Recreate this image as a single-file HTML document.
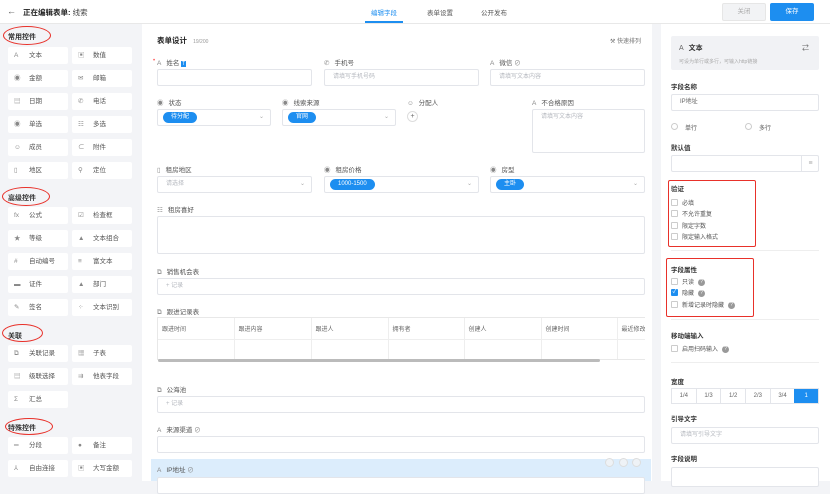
<!DOCTYPE html>
<html><head><meta charset="utf-8"><style>
*{box-sizing:border-box;margin:0;padding:0}
body{width:830px;height:481px;overflow:hidden;background:#f3f4f7;font-family:"Liberation Sans","Noto Sans CJK SC",sans-serif;font-size:7px;color:#333;position:relative}
.a{position:absolute}
.card{position:absolute;background:#fff;border-radius:2px;height:17px;width:60px;line-height:17px;padding-left:6px;color:#555;font-size:6.5px}
.card i{display:inline-block;width:9px;font-style:normal;color:#888;margin-right:6px}
.h{position:absolute;left:8px;font-size:7px;font-weight:bold;color:#333}
.ell{position:absolute;border:1.5px solid #e8312a;border-radius:50%}
.lbl{position:absolute;font-size:6.5px;color:#555}
.lbl i{font-style:normal;color:#888;margin-right:5px}
.inp{position:absolute;border:1px solid #e3e5ea;border-radius:2px;background:#fff;height:17px;color:#b5b8bf;font-size:6px;line-height:15px;padding-left:8px}
.tag{display:inline-block;background:#1d8ef0;color:#fff;border-radius:8px;padding:0 8px;height:11px;line-height:11px;font-size:6px;margin-top:2px;margin-left:-3px}
.dd{position:absolute;right:6px;top:0;color:#aaa;font-size:6px}
.rl{position:absolute;font-size:6.5px;color:#333;font-weight:bold}
.cb{position:absolute;width:7px;height:7px;border:1px solid #ccc;border-radius:1px;background:#fff}
.ct{position:absolute;font-size:6px;color:#555}
.q{display:inline-block;width:7px;height:7px;border-radius:50%;background:#999;color:#fff;font-size:5px;text-align:center;line-height:7px;margin-left:4px;vertical-align:middle}
.red{position:absolute;border:1.5px solid #e8312a;border-radius:2px}
</style></head><body>
<!-- header -->
<div class="a" style="left:0;top:0;width:830px;height:24px;background:#fff;border-bottom:1px solid #e8e8e8"></div>
<div class="a" style="left:7px;top:6px;font-size:9px;color:#555">←</div>
<div class="a" style="left:23px;top:7px;font-size:7.5px;font-weight:bold;color:#222">正在编辑表单: <span style="font-weight:normal;color:#444">线索</span></div>
<div class="a" style="left:371px;top:7px;font-size:6.5px;color:#1d8ef0">编辑字段</div>
<div class="a" style="left:365px;top:21px;width:38px;height:2px;background:#1d8ef0"></div>
<div class="a" style="left:427px;top:7px;font-size:6.5px;color:#555">表单设置</div>
<div class="a" style="left:481px;top:7px;font-size:6.5px;color:#555">公开发布</div>
<div class="a" style="left:722px;top:3px;width:44px;height:18px;background:#f2f3f5;border:1px solid #e6e6e6;border-radius:2px;color:#aaa;font-size:6.5px;text-align:center;line-height:16px">关闭</div>
<div class="a" style="left:770px;top:3px;width:44px;height:18px;background:#1d8ef0;border-radius:2px;color:#fff;font-size:6.5px;text-align:center;line-height:18px">保存</div>

<!-- left -->
<div class="h" style="top:32px">常用控件</div><div class="ell" style="left:3px;top:26px;width:48px;height:19px"></div>
<div class="card" style="left:8px;top:47px"><i>A</i>文本</div><div class="card" style="left:72px;top:47px"><i>▣</i>数值</div>
<div class="card" style="left:8px;top:70px"><i>◉</i>金额</div><div class="card" style="left:72px;top:70px"><i>✉</i>邮箱</div>
<div class="card" style="left:8px;top:93px"><i>▤</i>日期</div><div class="card" style="left:72px;top:93px"><i>✆</i>电话</div>
<div class="card" style="left:8px;top:116px"><i>◉</i>单选</div><div class="card" style="left:72px;top:116px"><i>☷</i>多选</div>
<div class="card" style="left:8px;top:139px"><i>☺</i>成员</div><div class="card" style="left:72px;top:139px"><i>⊂</i>附件</div>
<div class="card" style="left:8px;top:162px"><i>▯</i>地区</div><div class="card" style="left:72px;top:162px"><i>⚲</i>定位</div>
<div class="h" style="top:193px">高级控件</div><div class="ell" style="left:2px;top:187px;width:48px;height:19px"></div>
<div class="card" style="left:8px;top:207px"><i>fx</i>公式</div><div class="card" style="left:72px;top:207px"><i>☑</i>检查框</div>
<div class="card" style="left:8px;top:230px"><i>★</i>等级</div><div class="card" style="left:72px;top:230px"><i>▲</i>文本组合</div>
<div class="card" style="left:8px;top:253px"><i>#</i>自动编号</div><div class="card" style="left:72px;top:253px"><i>≡</i>富文本</div>
<div class="card" style="left:8px;top:276px"><i>▬</i>证件</div><div class="card" style="left:72px;top:276px"><i>▲</i>部门</div>
<div class="card" style="left:8px;top:299px"><i>✎</i>签名</div><div class="card" style="left:72px;top:299px"><i>⁘</i>文本识别</div>
<div class="h" style="top:331px">关联</div><div class="ell" style="left:2px;top:324px;width:41px;height:18px"></div>
<div class="card" style="left:8px;top:345px"><i>⧉</i>关联记录</div><div class="card" style="left:72px;top:345px"><i>▦</i>子表</div>
<div class="card" style="left:8px;top:368px"><i>▤</i>级联选择</div><div class="card" style="left:72px;top:368px"><i>⇉</i>他表字段</div>
<div class="card" style="left:8px;top:391px"><i>Σ</i>汇总</div>
<div class="h" style="top:423px">特殊控件</div><div class="ell" style="left:5px;top:418px;width:48px;height:17px"></div>
<div class="card" style="left:8px;top:437px"><i>═</i>分段</div><div class="card" style="left:72px;top:437px"><i>●</i>备注</div>
<div class="card" style="left:8px;top:460px"><i>⅄</i>自由连接</div><div class="card" style="left:72px;top:460px"><i>▣</i>大写金额</div>

<!-- center -->
<div class="a" style="left:142px;top:24px;width:510px;height:457px;background:#fff"></div>
<div class="a" style="left:157px;top:35px;font-size:7.5px;font-weight:bold;color:#222">表单设计 <span style="font-weight:normal;font-size:5px;color:#999;margin-left:4px">19/200</span></div>
<div class="a" style="left:610px;top:36px;font-size:6px;color:#777">⚒ 快速排列</div>

<div class="a" style="left:153px;top:58px;color:#f55;font-size:6px">•</div>
<div class="lbl" style="left:157px;top:57px"><i>A</i>姓名 <span style="background:#1d8ef0;color:#fff;font-size:5px;padding:0 1px">T</span></div>
<div class="lbl" style="left:324px;top:57px"><i>✆</i>手机号</div>
<div class="lbl" style="left:490px;top:57px"><i>A</i>微信 <span style="color:#888">⊘</span></div>
<div class="inp" style="left:157px;top:69px;width:155px"></div>
<div class="inp" style="left:324px;top:69px;width:155px">请填写手机号码</div>
<div class="inp" style="left:490px;top:69px;width:155px">请填写文本内容</div>

<div class="lbl" style="left:157px;top:97px"><i>◉</i>状态</div>
<div class="lbl" style="left:282px;top:97px"><i>◉</i>线索来源</div>
<div class="lbl" style="left:407px;top:97px"><i>☺</i>分配人</div>
<div class="lbl" style="left:532px;top:97px"><i>A</i>不合格原因</div>
<div class="inp" style="left:157px;top:109px;width:114px"><span class="tag">待分配</span><span class="dd">⌄</span></div>
<div class="inp" style="left:282px;top:109px;width:114px"><span class="tag">官网</span><span class="dd">⌄</span></div>
<div class="a" style="left:407px;top:111px;width:11px;height:11px;border:1px solid #ddd;border-radius:50%;text-align:center;line-height:9px;font-size:7px;color:#666">+</div>
<div class="inp" style="left:532px;top:109px;width:113px;height:44px;line-height:15px">请填写文本内容</div>

<div class="lbl" style="left:157px;top:164px"><i>▯</i>租房地区</div>
<div class="lbl" style="left:324px;top:164px"><i>◉</i>租房价格</div>
<div class="lbl" style="left:490px;top:164px"><i>◉</i>房型</div>
<div class="inp" style="left:157px;top:176px;width:155px">请选择<span class="dd">⌄</span></div>
<div class="inp" style="left:324px;top:176px;width:155px"><span class="tag">1000-1500</span><span class="dd">⌄</span></div>
<div class="inp" style="left:490px;top:176px;width:155px"><span class="tag">主卧</span><span class="dd">⌄</span></div>

<div class="lbl" style="left:157px;top:204px"><i>☷</i>租房喜好</div>
<div class="inp" style="left:157px;top:216px;width:488px;height:38px"></div>

<div class="lbl" style="left:157px;top:266px"><i>⧉</i>销售机会表</div>
<div class="inp" style="left:157px;top:278px;width:488px">+ 记录</div>
<div class="lbl" style="left:157px;top:306px"><i>⧉</i>跟进记录表</div>
<div class="a" style="left:157px;top:317px;width:488px;height:43px;border:1px solid #e8e8e8;border-right:none;overflow:hidden">
<table style="border-collapse:collapse;font-size:6px;color:#666;table-layout:fixed;width:540px">
<tr style="height:21px"><td style="width:76px;border-right:1px solid #eee;border-bottom:1px solid #eee;padding-left:4px">跟进时间</td><td style="width:77px;border-right:1px solid #eee;border-bottom:1px solid #eee;padding-left:4px">跟进内容</td><td style="width:77px;border-right:1px solid #eee;border-bottom:1px solid #eee;padding-left:4px">跟进人</td><td style="width:76px;border-right:1px solid #eee;border-bottom:1px solid #eee;padding-left:4px">拥有者</td><td style="width:77px;border-right:1px solid #eee;border-bottom:1px solid #eee;padding-left:4px">创建人</td><td style="width:76px;border-right:1px solid #eee;border-bottom:1px solid #eee;padding-left:4px">创建时间</td><td style="border-bottom:1px solid #eee;padding-left:4px">最近修改</td></tr>
<tr style="height:21px"><td style="border-right:1px solid #eee"></td><td style="border-right:1px solid #eee"></td><td style="border-right:1px solid #eee"></td><td style="border-right:1px solid #eee"></td><td style="border-right:1px solid #eee"></td><td style="border-right:1px solid #eee"></td><td></td></tr>
</table></div>
<div class="a" style="left:158px;top:359px;width:442px;height:3px;background:#bbb;border-radius:2px"></div>

<div class="lbl" style="left:157px;top:384px"><i>⧉</i>公海池</div>
<div class="inp" style="left:157px;top:396px;width:488px">+ 记录</div>
<div class="lbl" style="left:157px;top:424px"><i>A</i>来源渠道 <span style="color:#888">⊘</span></div>
<div class="inp" style="left:157px;top:436px;width:488px"></div>
<div class="a" style="left:151px;top:459px;width:500px;height:22px;background:#dcedfc"></div>
<div class="lbl" style="left:157px;top:464px"><i>A</i>IP地址 <span style="color:#888">⊘</span></div>
<div class="a" style="left:605px;top:458px;width:9px;height:9px;border-radius:50%;background:#eef2f6;border:1px solid #ddd"></div>
<div class="a" style="left:619px;top:458px;width:9px;height:9px;border-radius:50%;background:#eef2f6;border:1px solid #ddd"></div>
<div class="a" style="left:632px;top:458px;width:9px;height:9px;border-radius:50%;background:#eef2f6;border:1px solid #ddd"></div>
<div class="inp" style="left:157px;top:477px;width:488px"></div>

<!-- right -->
<div class="a" style="left:661px;top:24px;width:169px;height:457px;background:#fff"></div>
<div class="a" style="left:671px;top:36px;width:148px;height:34px;background:#f1f2f5;border-radius:2px"></div>
<div class="a" style="left:679px;top:43px;font-size:7px;font-weight:bold;color:#333"><span style="font-weight:normal;color:#666;margin-right:5px">A</span>文本</div>
<div class="a" style="left:802px;top:43px;font-size:7px;color:#666">⇄</div>
<div class="a" style="left:679px;top:58px;font-size:5px;color:#aaa">可设为单行或多行，可输入http链接</div>
<div class="rl" style="left:671px;top:81px">字段名称</div>
<div class="inp" style="left:671px;top:94px;width:148px;color:#666">IP地址</div>
<div class="a" style="left:671px;top:123px;width:7px;height:7px;border:1px solid #ccc;border-radius:50%"></div><div class="ct" style="left:685px;top:123px">单行</div>
<div class="a" style="left:745px;top:123px;width:7px;height:7px;border:1px solid #ccc;border-radius:50%"></div><div class="ct" style="left:759px;top:123px">多行</div>
<div class="rl" style="left:671px;top:142px">默认值</div>
<div class="inp" style="left:671px;top:155px;width:148px"></div>
<div class="a" style="left:801px;top:155px;width:18px;height:17px;border-left:1px solid #e3e5ea;color:#aaa;font-size:7px;text-align:center;line-height:17px">≡</div>
<div class="red" style="left:668px;top:180px;width:88px;height:67px"></div>
<div class="rl" style="left:671px;top:183px">验证</div>
<div class="cb" style="left:671px;top:199px"></div><div class="ct" style="left:682px;top:198px">必填</div>
<div class="cb" style="left:671px;top:210px"></div><div class="ct" style="left:682px;top:209px">不允许重复</div>
<div class="cb" style="left:671px;top:222px"></div><div class="ct" style="left:682px;top:221px">限定字数</div>
<div class="cb" style="left:671px;top:233px"></div><div class="ct" style="left:682px;top:232px">限定输入格式</div>
<div class="a" style="left:671px;top:250px;width:148px;height:1px;background:#eee"></div>
<div class="red" style="left:666px;top:258px;width:88px;height:59px"></div>
<div class="rl" style="left:671px;top:264px">字段属性</div>
<div class="cb" style="left:671px;top:278px"></div><div class="ct" style="left:682px;top:277px">只读<span class="q">?</span></div>
<div class="cb" style="left:671px;top:289px;background:#1d8ef0;border-color:#1d8ef0;color:#fff;font-size:6px;line-height:5px;text-align:center">✓</div><div class="ct" style="left:682px;top:288px">隐藏<span class="q">?</span></div>
<div class="cb" style="left:671px;top:301px"></div><div class="ct" style="left:682px;top:300px">新增记录时隐藏<span class="q">?</span></div>
<div class="a" style="left:671px;top:319px;width:148px;height:1px;background:#eee"></div>
<div class="rl" style="left:671px;top:330px">移动端输入</div>
<div class="cb" style="left:671px;top:345px"></div><div class="ct" style="left:682px;top:344px">启用扫码输入<span class="q">?</span></div>
<div class="a" style="left:671px;top:362px;width:148px;height:1px;background:#eee"></div>
<div class="rl" style="left:671px;top:376px">宽度</div>
<div class="a" style="left:671px;top:388px;width:148px;height:16px;border:1px solid #e3e5ea;display:flex;font-size:6px;color:#666">
<div style="flex:1;text-align:center;line-height:14px;border-right:1px solid #e3e5ea">1/4</div><div style="flex:1;text-align:center;line-height:14px;border-right:1px solid #e3e5ea">1/3</div><div style="flex:1;text-align:center;line-height:14px;border-right:1px solid #e3e5ea">1/2</div><div style="flex:1;text-align:center;line-height:14px;border-right:1px solid #e3e5ea">2/3</div><div style="flex:1;text-align:center;line-height:14px">3/4</div><div style="flex:1;text-align:center;line-height:14px;background:#1d8ef0;color:#fff">1</div></div>
<div class="rl" style="left:671px;top:413px">引导文字</div>
<div class="inp" style="left:671px;top:427px;width:148px">请填写引导文字</div>
<div class="rl" style="left:671px;top:453px">字段说明</div>
<div class="inp" style="left:671px;top:467px;width:148px;height:20px"></div>
</body></html>
